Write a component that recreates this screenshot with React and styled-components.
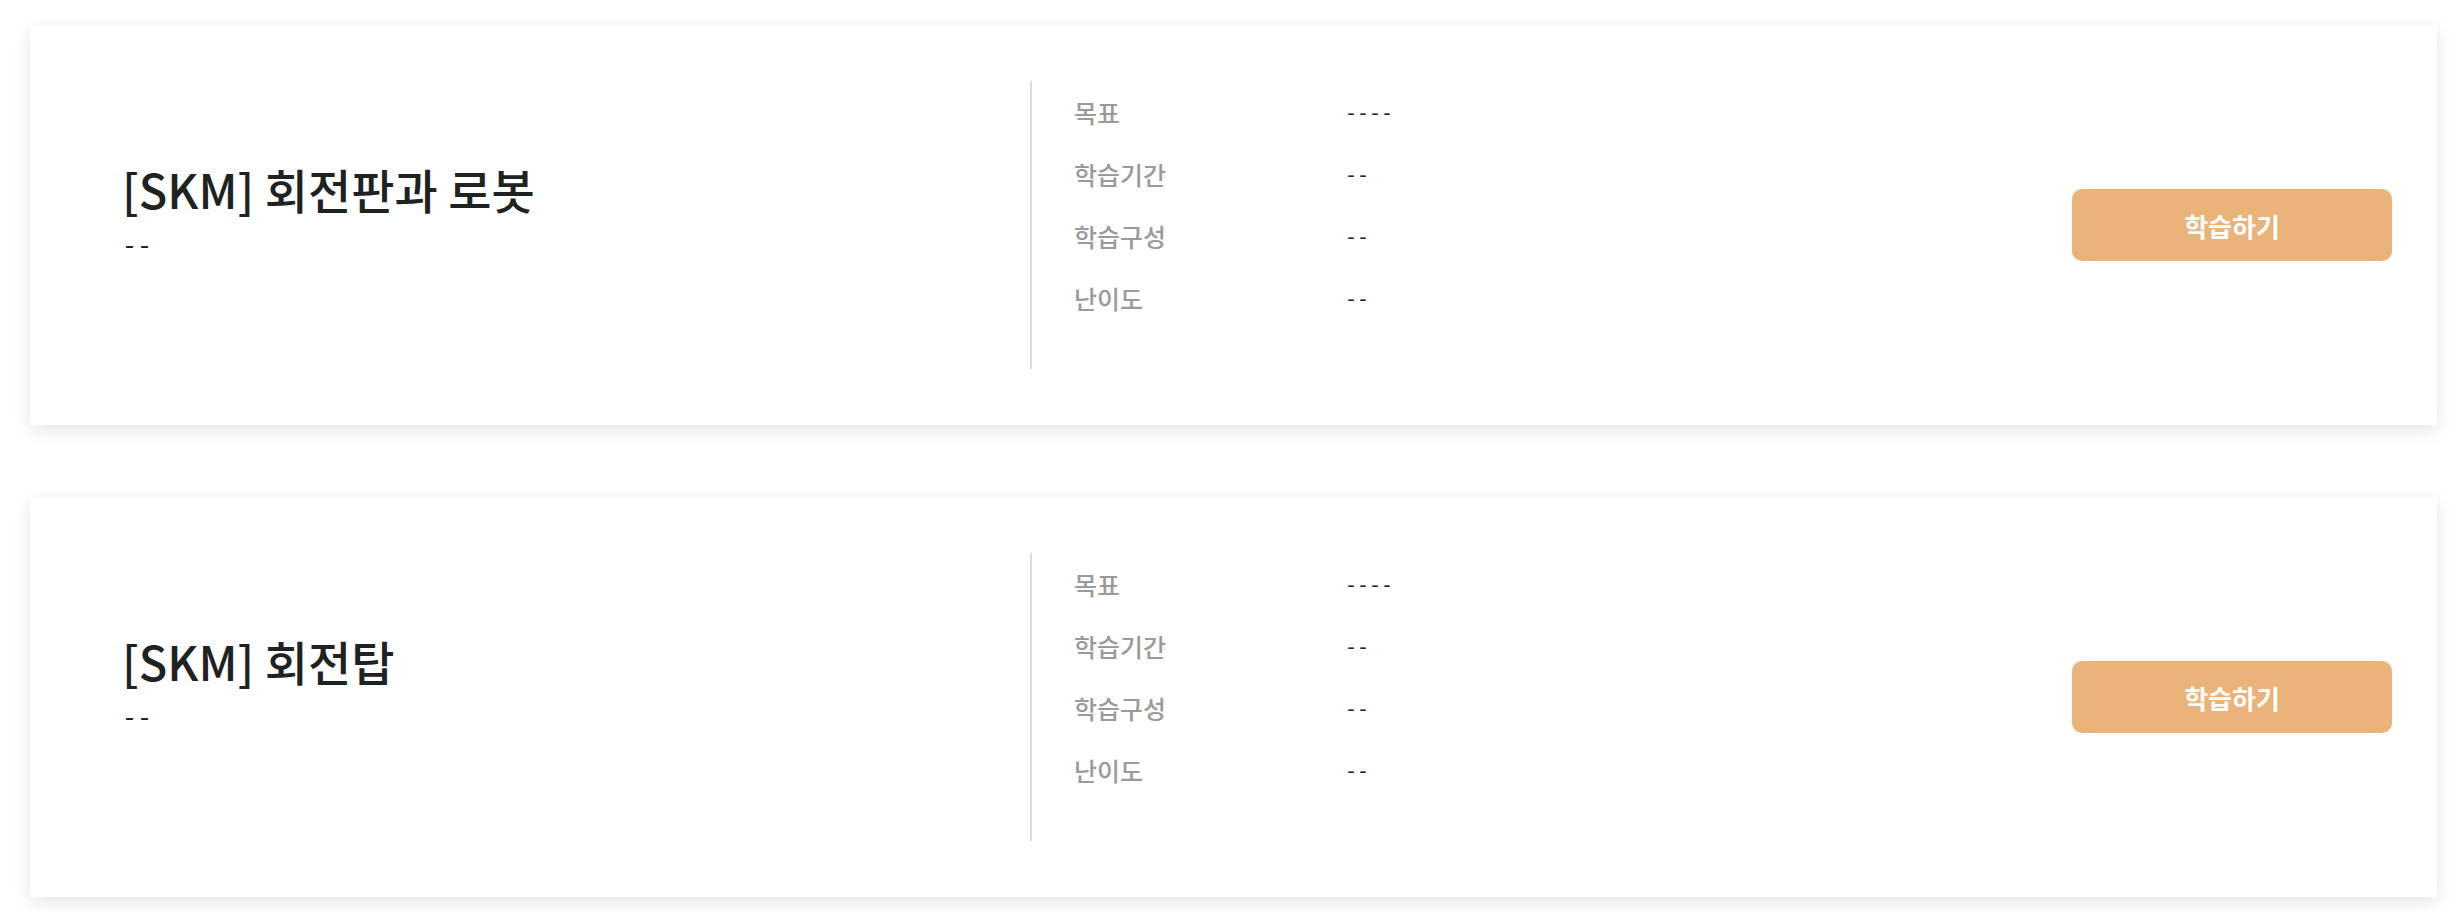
import React from 'react'
import styled, { createGlobalStyle } from 'styled-components'

const GlobalStyle = createGlobalStyle`
    body {
        margin: 0;
        background: #ffffff;
        font-family: "Noto Sans CJK KR", "Noto Sans", sans-serif;
    }
`;

const courses = [
    { id: 1, title: '[SKM] 회전판과 로봇', sub: '--', goal: '----', period: '--', parts: '--', level: '--' },
    { id: 2, title: '[SKM] 회전탑', sub: '--', goal: '----', period: '--', parts: '--', level: '--' },
]

function CourseCard({ course }) {
    const rows = [
        ['목표', course.goal],
        ['학습기간', course.period],
        ['학습구성', course.parts],
        ['난이도', course.level],
    ]
    return (
        <CardStyled>
            <div className="head">
                <h2>{course.title}</h2>
                <p>{course.sub}</p>
            </div>
            <div className="info">
                {rows.map(([label, value]) => (
                    <div className="row" key={label}>
                        <span className="label">{label}</span>
                        <span className="value">{value}</span>
                    </div>
                ))}
            </div>
            <StudyButton type="button">학습하기</StudyButton>
        </CardStyled>
    )
}

function App() {
    return (
        <>
            <GlobalStyle />
            <ListStyled>
                {courses.map((c) => (
                    <CourseCard key={c.id} course={c} />
                ))}
            </ListStyled>
        </>
    )
}

const ListStyled = styled.div`
    display: flex;
    flex-direction: column;
    gap: 72px;
    padding: 25px 22px 20px 30px;
`;

const CardStyled = styled.div`
    display: flex;
    align-items: center;
    height: 400px;
    box-sizing: border-box;
    padding: 56px 45px 56px 0;
    background: #ffffff;
    box-shadow: 0 5px 18px rgba(0, 0, 0, 0.11);

    .head {
        width: 1000px;
        box-sizing: border-box;
        padding: 0 0 26px 92px;
        h2 {
            margin: 0;
            font-size: 47px;
            font-weight: 500;
            line-height: 56px;
            color: #1e2322;
        }
        p {
            margin: 16px 0 0;
            font-family: "Liberation Mono", monospace;
            font-size: 25px;
            line-height: 30px;
            color: #1e2322;
        }
    }

    .info {
        flex: 1;
        align-self: stretch;
        border-left: 2px solid #dddddd;
        padding-left: 42px;
        .row {
            display: flex;
            align-items: center;
            height: 62px;
        }
        .label {
            width: 271px;
            font-size: 25px;
            font-weight: 500;
            color: #9a9a9a;
        }
        .value {
            padding-top: 4px;
            font-family: "Liberation Mono", monospace;
            font-size: 20px;
            color: #222222;
        }
    }
`;

const StudyButton = styled.button`
    width: 320px;
    height: 72px;
    border: none;
    border-radius: 10px;
    background: #e9b37a;
    color: #ffffff;
    font-family: "Noto Sans CJK KR", "Noto Sans", sans-serif;
    font-size: 26px;
    font-weight: 700;
    cursor: pointer;
`;

export default App
